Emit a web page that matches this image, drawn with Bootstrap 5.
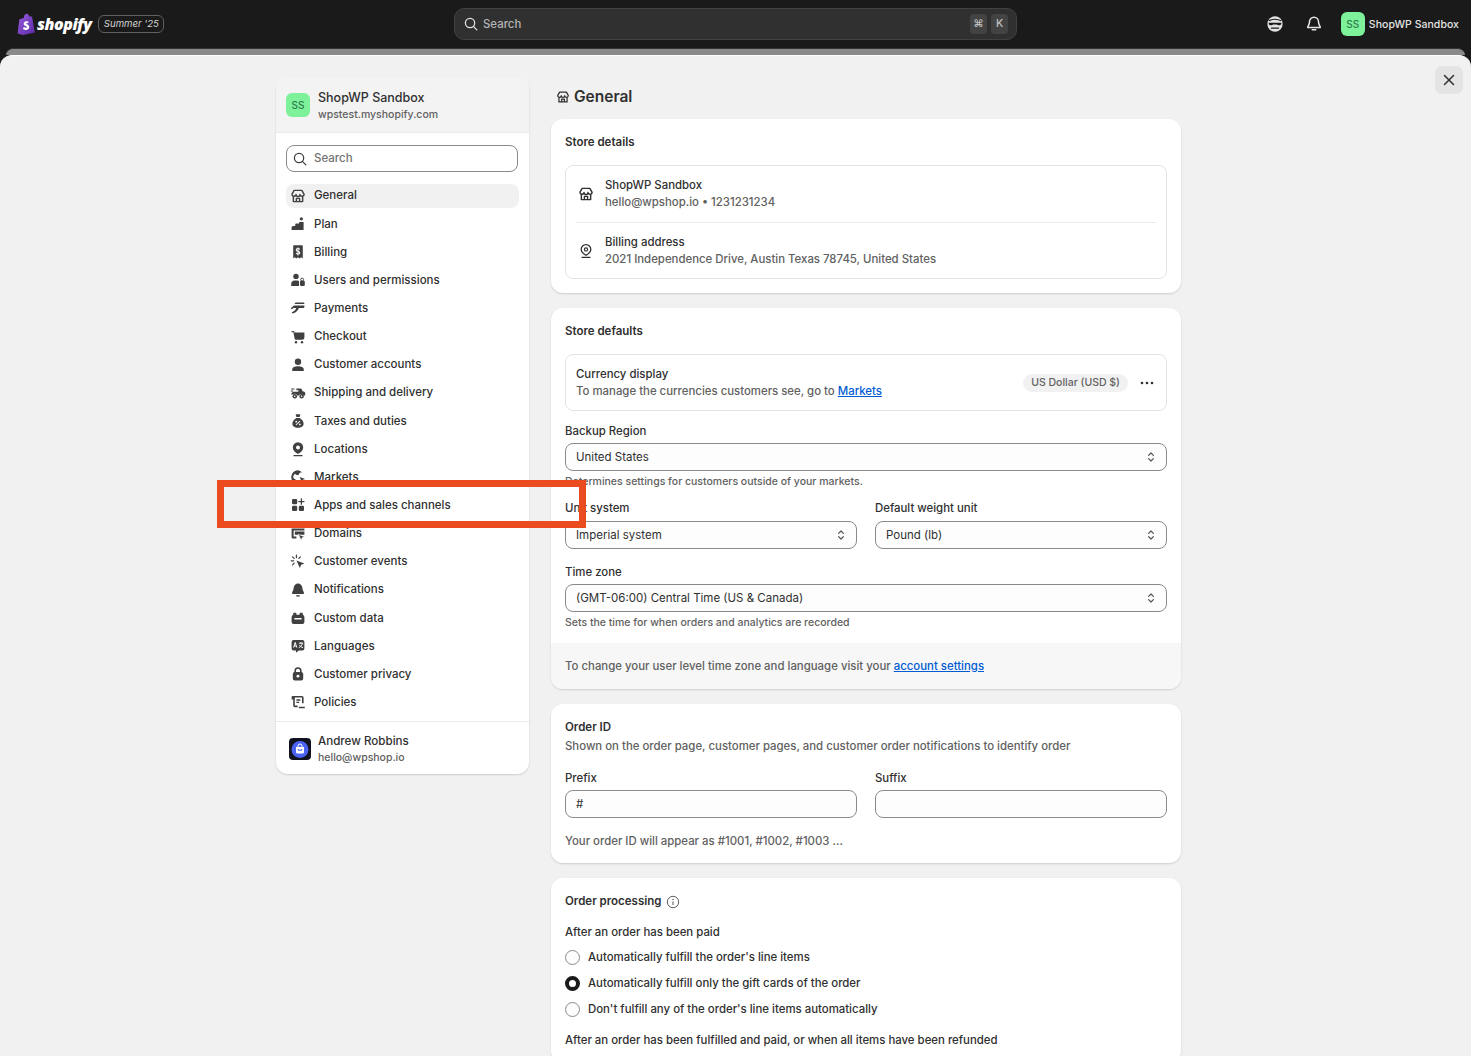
<!DOCTYPE html>
<html lang="en">
<head>
  <meta charset="UTF-8" />
  <meta name="viewport" content="width=device-width, initial-scale=1.0"/>
  <title>General - ShopWP Sandbox</title>
  <link href="https://cdn.jsdelivr.net/npm/bootstrap@5.3.0/dist/css/bootstrap.min.css" rel="stylesheet"/>
  <script src="https://cdn.jsdelivr.net/npm/bootstrap@5.3.0/dist/js/bootstrap.bundle.min.js"></script>
  <style>
  html, body { height: 1056px; overflow: hidden; }
  body {
    background-color: #1a1a1a;
    color: #303030;
    font-family: "Inter", "Liberation Sans", sans-serif;
    font-size: 11.4px;
    line-height: 17px;
    font-weight: 450;
    position: relative;
  }
  .ico { width: 16px; height: 16px; fill: #404040; flex: none; }
  .ico-title { width: 14px; height: 14px; }

  /* top bar */
  .topbar { height: 48px; padding-left: 17px; }
  .brand-box { width: 437px; }
  .brand-word { font-family: "Open Sans", sans-serif; font-weight: 800; font-style: italic; font-size: 16px; letter-spacing: -.5px; color: #fff; margin-left: 2px; line-height: 20px; }
  .brand-tag { margin-left: 7px; height: 18px; width: 66px; border: 1px solid #616161; border-radius: 6px; color: #d4d4d4; font-size: 9.6px; font-style: italic; line-height: 16px; text-align: center; }
  .top-search { width: 563px; height: 32px; background: #303030; border: 1px solid #414141; border-radius: 10px; color: #b5b5b5; padding: 0 8px; }
  .top-key { width: 17px; height: 20px; background: #434343; border-radius: 4px; color: #c4c4c4; font-size: 10.5px; line-height: 20px; text-align: center; }
  .top-right { margin-left: auto; padding-right: 12px; color: #e3e3e3; }
  .top-name { margin-left: 4px; font-size: 10.5px; letter-spacing: .05px; font-weight: 450; }
  .avatar-ss { background: #7df29b; color: #2f7a4b; border-radius: 6px; width: 24px; height: 24px; font-size: 10px; line-height: 24px; text-align: center; flex: none; }
  .face-ico { margin-right: 21px; }
  .bell-ico { margin-right: 18px; }
  .sheet-edge { height: 7px; margin: 0 6px; background: #8a8a8a; border-top: 1px solid #333; border-radius: 8px 8px 0 0; }

  /* sheet */
  .sheet { background: #f1f1f1; height: 1001px; border-top: 1px solid #fff; border-radius: 12px 12px 0 0; padding: 21px 0 0 276px; position: relative; overflow: hidden; }
  .close-btn { position: absolute; top: 10px; right: 8px; width: 28px; height: 28px; background: #e4e4e4; border-radius: 7px; }

  /* sidebar */
  .side-panel { width: 253px; height: 697px; background: #fff; border-radius: 12px; box-shadow: 0 1px 2px rgba(0,0,0,.15); margin-right: 22px; overflow: hidden; flex: none; }
  .side-head { height: 56px; background: #f3f3f3; border-bottom: 1px solid #ebebeb; padding: 0 10px; }
  .side-head-text { padding-top: 2px; }
  .side-sub { color: #616161; font-size: 10.5px; }
  .side-name { font-weight: 550; font-size: 12.5px; }
  .side-search { margin: 12px 11px 11.9px 10px; height: 27px; border: 1px solid #8a8a8a; border-radius: 8px; color: #737373; padding: 0 8px 0 5px; gap: 6px; font-size: 11.5px; }
  .side-list { margin: 0 10px 0; gap: 4.15px; }
  .side-link { height: 24px; padding: 0 5px 0 4px; border-radius: 8px; gap: 8px; font-weight: 500; font-size: 11.5px; color: #303030; text-decoration: none; }
  .side-link.is-on { background: #f1f1f1; }
  .side-foot { height: 53px; border-top: 1px solid #ebebeb; padding: 2px 13px 0; gap: 7px; }
  .foot-name { font-weight: 550; font-size: 11.6px; }
  .foot-mail { color: #616161; font-size: 10.5px; line-height: 15px; }
  .foot-logo { width: 22px; height: 22px; flex: none; }

  /* settings */
  .main-col { width: 630px; flex: none; }
  .page-title { font-size: 15.5px; font-weight: 600; line-height: 20px; margin: 10px 0 12px 5px; gap: 4px; color: #303030; }
  .set-card { background: #fff; border-radius: 12px; box-shadow: 0 1px 2px rgba(0,0,0,.15); margin-bottom: 15px; padding: 15px 14px 0; overflow: hidden; }
  .card-pad { padding-bottom: 14px; }
  .card-pad-sm { padding-bottom: 13px; }
  .set-title { font-weight: 600; font-size: 11.5px; line-height: 17px; margin: 0; }
  .set-title-info { gap: 5px; }
  .set-box { border: 1px solid #e3e3e3; border-radius: 8px; margin-top: 14px; }
  .box-row { margin: 0 10px; gap: 11px; height: 56px; padding-left: 2px; }
  .box-row + .box-row { border-top: 1px solid #ebebeb; }
  .currency-box { height: 57px; padding-left: 10px; }
  .dots-ico { margin: 0 9px 0 1px; }
  .muted-text { color: #616161; }
  .pill-text { background: #f1f1f1; color: #616161; border-radius: 9px; height: 18px; line-height: 18px; padding: 0 8px; font-size: 10.5px; white-space: nowrap; }
  .field-label { display: block; margin: 12px 0 3px; }
  .label-unit { margin: 10px 0 4px; }
  .label-zone { margin-top: 15px; }
  .label-order { margin-top: 15px; }
  .set-field.form-select, .set-field.form-control { height: 28px; border: 1px solid #8a8a8a; border-radius: 8px; padding: 0 10px; color: #303030; font-size: 11.5px; line-height: 26px; box-shadow: none; background-color: #fdfdfd; }
  .set-field.form-select { background-position: right 7px center; background-size: 16px 16px; background-image: url("data:image/svg+xml,%3Csvg xmlns='http://www.w3.org/2000/svg' viewBox='0 0 20 20'%3E%3Cpath d='M7 8l3-3 3 3M7 12l3 3 3-3' fill='none' stroke='%23555' stroke-width='1.5' stroke-linecap='round' stroke-linejoin='round'/%3E%3C/svg%3E"); }
  .help-text { color: #616161; font-size: 10.5px; margin-top: 2px; }
  .two-cols { --bs-gutter-x: 18px; --bs-gutter-y: 0; }
  .set-foot { background: #f7f7f7; margin: 12px -14px 0; height: 46px; padding: 0 14px; }
  .set-foot a, .set-box a { color: #005bd3; }
  .order-desc { margin-top: 2px; }
  .order-note { margin-top: 15px; }
  .radio-head { margin: 14px 0 3px; }
  .radio-next { margin-top: 9px; }
  .radio-line { height: 26.3px; gap: 8px; margin: 0; padding: 0; min-height: 0; }
  .radio-line .form-check-input { float: none; width: 15px; height: 15px; margin: 0; border: 1px solid #8a8a8a; background-color: #fdfdfd; flex: none; box-shadow: none; }
  .radio-line .form-check-input:checked { background: #fff; border: 4.5px solid #1a1a1a; }

  /* annotation from the screenshot */
  .red-frame { position: absolute; left: 217px; top: 480px; width: 369px; height: 48px; border: 7px solid #ea4b1f; z-index: 5; pointer-events: none; }
  </style>
</head>
<body>

<svg width="0" height="0" class="position-absolute">
  <symbol id="i-store" viewBox="0 0 20 20"><path d="M5.2 3h9.600l2.700 4.600a2.500 2.500 0 0 1-5 .6 2.500 2.500 0 0 1-5 0 2.500 2.500 0 0 1-5-.6zM4.200 10.500V17h11.600v-6.500M8 17v-4h4v4" fill="none" stroke="currentColor" stroke-width="1.800" stroke-linejoin="round"/></symbol>
  <symbol id="i-plan" viewBox="0 0 20 20"><path d="M2 17.500v-3a2 2 0 0 1 2-2h2.500v-1.500a1.500 1.500 0 0 1 1.500-1.500H11.500V7.500h5.500v10z"/><circle cx="14.200" cy="3.500" r="2"/></symbol>
  <symbol id="i-billing" viewBox="0 0 20 20"><path d="M4 2.500a1 1 0 0 1 1-1h10a1 1 0 0 1 1 1V18l-2-1.500-2 1.500-2-1.500L8 18l-2-1.500L4 18z"/><path d="M12.300 6.800c-.5-.8-1.300-1.100-2.300-1.100-1.300 0-2.300.6-2.300 1.700 0 2.300 4.600 1.100 4.600 3.400 0 1.100-1 1.700-2.300 1.700-1 0-1.800-.4-2.300-1.200M10 4.300v10" fill="none" stroke="#fff" stroke-width="1.300"/></symbol>
  <symbol id="i-users" viewBox="0 0 20 20"><circle cx="7.500" cy="5.500" r="3.400"/><path d="M1.500 17.500v-2.500a4.500 4.500 0 0 1 4.500-4.500h3c1 0 1.700.3 2.300.7v6.300z"/><circle cx="15.200" cy="9.500" r="1.800" fill="none" stroke="#404040" stroke-width="1.200"/><rect x="12.500" y="11" width="6" height="6.500" rx="1.500"/></symbol>
  <symbol id="i-pay" viewBox="0 0 20 20"><path d="M7 3h9.500a1.500 1.500 0 0 1 1.500 1.500V5H5.500C6 4 6.500 3.500 7 3zM5 7h13v1.500a1.500 1.500 0 0 1-1.500 1.500H11c-.5 2-2 4-4.500 5.500L3.500 17 2 15.500l4-2.500c1-.8 1.500-1.700 1.700-3H4.500L2 11.500 1 10.300z"/></symbol>
  <symbol id="i-cart" viewBox="0 0 20 20"><path d="M2 2.500h2.200a1.300 1.300 0 0 1 1.300 1.100l.1.900H18v6a3 3 0 0 1-3 3H7.500a1.800 1.800 0 0 1-1.800-1.600L4.300 4H2z"/><circle cx="7.500" cy="16.500" r="1.500"/><circle cx="15" cy="16.500" r="1.500"/></symbol>
  <symbol id="i-person" viewBox="0 0 20 20"><circle cx="10" cy="6" r="4"/><path d="M2.800 17.500v-1.800c0-2.500 3-4 7.200-4s7.200 1.500 7.200 4v1.800z"/></symbol>
  <symbol id="i-ship" viewBox="0 0 20 20"><path d="M8 4.500h5.500a1 1 0 0 1 .9.500l1.600 3h1a2 2 0 0 1 2 2v3h-2.500a2.800 2.800 0 0 0-5.200 0H9a3.200 3.200 0 0 0-5.500-1H1.500c.2-2 1.500-3.500 3.500-3.500h5.500V6.500H8z"/><path d="M1 7.500h3M1.500 5h4" fill="none" stroke="#404040" stroke-width="1.300"/><circle cx="6" cy="14" r="2.800"/><circle cx="14.500" cy="14" r="2.800"/><circle cx="6" cy="14" r="1" fill="#fff"/><circle cx="14.500" cy="14" r="1" fill="#fff"/></symbol>
  <symbol id="i-tax" viewBox="0 0 20 20"><path d="M7 1.500h6l-1 3.500H8zM7.800 6.300h4.400C15 8 17 10.500 17 13.500c0 3-2.800 5-7 5s-7-2-7-5c0-3 2-5.500 4.800-7.200z"/><path d="M7.500 15l5-5" stroke="#fff" stroke-width="1.300"/><circle cx="7.800" cy="10.800" r="1.100" fill="#fff"/><circle cx="12.300" cy="14.300" r="1.100" fill="#fff"/></symbol>
  <symbol id="i-pin" viewBox="0 0 20 20"><path d="M10 1.500a6.500 6.500 0 0 1 6.500 6.500c0 3.300-3 6.200-6.500 8.300C6.500 14.200 3.500 11.300 3.500 8A6.500 6.500 0 0 1 10 1.500z"/><circle cx="10" cy="8" r="2.500" fill="#fff"/><path d="M5 18.300h10" stroke="#404040" stroke-width="1.600" stroke-linecap="round"/></symbol>
  <symbol id="i-globe" viewBox="0 0 20 20"><path d="M10 1.500a8.500 8.500 0 1 0 0 17l-.5-2c-1-.2-1.500-1-1.500-2 0-2-4-1.500-4-4.500 0-1.500.8-3 2.300-4 1 1 2.500 2 4.200 1.500 1-.5.700-1.800 1.500-2.500.8-.7 2-.5 3-.5A8.500 8.500 0 0 0 10 1.500z"/><path d="M12 10l7 2.500-3 1-1 3z"/></symbol>
  <symbol id="i-apps" viewBox="0 0 20 20"><rect x="2.500" y="2.500" width="6.500" height="6.500" rx="1.500"/><rect x="2.500" y="11" width="6.500" height="6.500" rx="1.500"/><rect x="11" y="11" width="6.500" height="6.500" rx="1.500"/><path d="M14.200 2.500v6.500M11 5.700h6.500" stroke="#404040" stroke-width="1.600" stroke-linecap="round"/></symbol>
  <symbol id="i-domain" viewBox="0 0 20 20"><path d="M2 3h16v2.500H4.500V13H8v2.500H3.500A1.500 1.500 0 0 1 2 14z"/><path d="M6 7h12v4h-5l-2 1v-1H6z"/><path d="M10.500 10.500l8 3-3.300 1.200-1.200 3.300z" stroke="#fff" stroke-width=".8"/></symbol>
  <symbol id="i-cursor" viewBox="0 0 20 20"><path d="M8 8l10 3.800-4 1.500-1.700 4.200z"/><path d="M8 1.500v3M3.200 3.500l2 2M1.500 8.500h3M3.200 13.500l2-2M13 3.500l-2 2" fill="none" stroke="#404040" stroke-width="1.500" stroke-linecap="round"/></symbol>
  <symbol id="i-bell" viewBox="0 0 20 20"><path d="M10 2a5.500 5.500 0 0 1 5.500 5.500c0 3.500 2 4.500 2 6.500a1 1 0 0 1-1 1h-13a1 1 0 0 1-1-1c0-2 2-3 2-6.500A5.500 5.500 0 0 1 10 2z"/><path d="M7.500 16.500h5a2.500 2 0 0 1-5 0z"/></symbol>
  <symbol id="i-data" viewBox="0 0 20 20"><path d="M5 3.500h2a1 1 0 0 1 1 1V6h4V4.500a1 1 0 0 1 1-1h2a1 1 0 0 1 1 1V6a3 3 0 0 1 2 3v6a2.500 2.500 0 0 1-2.500 2.500h-11A2.500 2.500 0 0 1 2 15V9a3 3 0 0 1 2-3V4.500a1 1 0 0 1 1-1z"/><path d="M5.500 11h9" stroke="#fff" stroke-width="1.700"/></symbol>
  <symbol id="i-lang" viewBox="0 0 20 20"><path d="M4.500 2.500h11A2.500 2.500 0 0 1 18 5v8a2.500 2.500 0 0 1-2.500 2.500H11L7.500 18.500v-3h-3A2.500 2.500 0 0 1 2 13V5a2.500 2.500 0 0 1 2.500-2.500z"/><path d="M4.500 12l2-6.500 2 6.500M5.200 10h2.600M11 6.500h5.500M13.700 5v1.500M15.500 6.500c-.4 2.500-2 4.500-4.500 5.500M11.800 8.500c.7 1.500 2 3 4.500 3.500" fill="none" stroke="#fff" stroke-width="1.200"/></symbol>
  <symbol id="i-lock" viewBox="0 0 20 20"><path d="M10 1.500a4.500 4.500 0 0 1 4.500 4.500v1.500A2.500 2.500 0 0 1 16.500 10v5.500A2.500 2.500 0 0 1 14 18H6a2.500 2.500 0 0 1-2.500-2.500V10a2.500 2.500 0 0 1 2-2.500V6A4.500 4.500 0 0 1 10 1.500zM7.500 7.500h5V6a2.500 2.500 0 0 0-5 0z" fill-rule="evenodd"/><circle cx="10" cy="12.700" r="1.800" fill="#fff"/></symbol>
  <symbol id="i-policy" viewBox="0 0 20 20"><path d="M3.500 2.500H15A2 2 0 0 1 17 4.500v7H15V4.500H6v10H9.500v2H6a2 2 0 0 1-2-2V7H2V4a1.500 1.500 0 0 1 1.500-1.500z"/><path d="M8 7.500h5M8 10.500h3.500" stroke="#404040" stroke-width="1.600"/><path d="M11 16h7.500v1.800H11z"/></symbol>
  <symbol id="i-search" viewBox="0 0 20 20"><circle cx="8.800" cy="8.800" r="5.800" fill="none" stroke="currentColor" stroke-width="1.600"/><path d="M13 13l4.300 4.300" fill="none" stroke="currentColor" stroke-width="1.600" stroke-linecap="round"/></symbol>
  <symbol id="i-pin-line" viewBox="0 0 20 20"><path d="M10 2a6 6 0 0 1 6 6c0 3-2.700 5.300-6 7.300C6.700 13.300 4 11 4 8a6 6 0 0 1 6-6z" fill="none" stroke="currentColor" stroke-width="1.600"/><circle cx="10" cy="8" r="2" fill="none" stroke="currentColor" stroke-width="1.500"/><path d="M5 18h10" stroke="currentColor" stroke-width="1.600" stroke-linecap="round"/></symbol>
</svg>

<header class="topbar d-flex align-items-center">
  <div class="brand-box d-flex align-items-center">
    <svg width="18" height="22" viewBox="0 0 18 22">
      <defs><linearGradient id="bagGrad" x1="0" y1="0" x2="1" y2="1"><stop offset="0" stop-color="#9a5be0"/><stop offset="1" stop-color="#5a2aa5"/></linearGradient></defs>
      <path d="M7 3.200C7.500 1.500 8.800.5 10 .7c1.200.2 2 1.300 2.300 2.700l1.800-.2 1 .8L17.800 19.500 6 22 .6 20.500 2.300 6.500 7 4.800z" fill="url(#bagGrad)"/>
      <path d="M11.600 8.800c-.6-.4-1.400-.6-2.200-.5-1.900.2-2.800 1.400-2.700 2.600.2 2 3.100 2.100 3.200 3.300 0 .7-1.400 1-3.200-.1l-.7 2c1.600 1 3.100 1 4.100.7 1.500-.5 2.400-1.700 2.200-3.100-.3-2.100-3-2.200-3.100-3.100 0-.5.700-.8 2-.3z" fill="#fff"/>
    </svg>
    <span class="brand-word">shopify</span>
    <span class="brand-tag">Summer '25</span>
  </div>
  <div class="top-search d-flex align-items-center gap-1">
    <svg class="ico" aria-hidden="true"><use href="#i-search" color="#e3e3e3"/></svg>
    <span class="flex-grow-1">Search</span>
    <span class="top-key">⌘</span>
    <span class="top-key">K</span>
  </div>
  <div class="top-right d-flex align-items-center">
    <svg width="18" height="18" viewBox="0 0 20 20" class="face-ico">
      <circle cx="10" cy="10" r="8.500" fill="#e3e3e3"/>
      <path d="M3 6.500c4-2 10-2 14 0" stroke="#1a1a1a" stroke-width="1.300" fill="none"/>
      <path d="M3 8.500h14v1.500c-.5 1.800-4 1.800-5 .5H8c-1 1.300-4.500 1.300-5-.5z" fill="#1a1a1a"/>
      <path d="M6 14.500h8" stroke="#1a1a1a" stroke-width="1.500" stroke-linecap="round"/>
    </svg>
    <svg width="18" height="18" viewBox="0 0 20 20" class="bell-ico">
      <path d="M10 2.500a5 5 0 0 1 5 5c0 3.500 2 4.500 2 6.500H3c0-2 2-3 2-6.500a5 5 0 0 1 5-5zM8 16.500h4" fill="none" stroke="#e3e3e3" stroke-width="1.700" stroke-linecap="round" stroke-linejoin="round"/>
    </svg>
    <span class="avatar-ss">SS</span>
    <span class="top-name">ShopWP Sandbox</span>
  </div>
</header>
<div class="sheet-edge"></div>

<div class="sheet d-flex align-items-start">
  <button type="button" class="close-btn btn p-0 d-flex align-items-center justify-content-center" aria-label="Close">
    <svg width="14" height="14" viewBox="0 0 14 14"><path d="M2.500 2.500l9 9M11.500 2.500l-9 9" stroke="#303030" stroke-width="1.500" stroke-linecap="round"/></svg>
  </button>

  <aside class="side-panel d-flex flex-column">
    <div class="side-head d-flex align-items-center gap-2">
      <span class="avatar-ss">SS</span>
      <div class="side-head-text">
        <div class="side-name">ShopWP Sandbox</div>
        <div class="side-sub">wpstest.myshopify.com</div>
      </div>
    </div>
    <div class="side-search d-flex align-items-center">
      <svg class="ico"><use href="#i-search" color="#404040"/></svg>
      <span>Search</span>
    </div>
    <ul class="side-list list-unstyled d-flex flex-column mb-0">
      <li><a href="#" class="side-link is-on d-flex align-items-center"><svg class="ico"><use href="#i-store" color="#404040"/></svg>General</a></li>
      <li><a href="#" class="side-link d-flex align-items-center"><svg class="ico"><use href="#i-plan"/></svg>Plan</a></li>
      <li><a href="#" class="side-link d-flex align-items-center"><svg class="ico"><use href="#i-billing"/></svg>Billing</a></li>
      <li><a href="#" class="side-link d-flex align-items-center"><svg class="ico"><use href="#i-users"/></svg>Users and permissions</a></li>
      <li><a href="#" class="side-link d-flex align-items-center"><svg class="ico"><use href="#i-pay"/></svg>Payments</a></li>
      <li><a href="#" class="side-link d-flex align-items-center"><svg class="ico"><use href="#i-cart"/></svg>Checkout</a></li>
      <li><a href="#" class="side-link d-flex align-items-center"><svg class="ico"><use href="#i-person"/></svg>Customer accounts</a></li>
      <li><a href="#" class="side-link d-flex align-items-center"><svg class="ico"><use href="#i-ship"/></svg>Shipping and delivery</a></li>
      <li><a href="#" class="side-link d-flex align-items-center"><svg class="ico"><use href="#i-tax"/></svg>Taxes and duties</a></li>
      <li><a href="#" class="side-link d-flex align-items-center"><svg class="ico"><use href="#i-pin"/></svg>Locations</a></li>
      <li><a href="#" class="side-link d-flex align-items-center"><svg class="ico"><use href="#i-globe"/></svg>Markets</a></li>
      <li><a href="#" class="side-link d-flex align-items-center"><svg class="ico"><use href="#i-apps"/></svg>Apps and sales channels</a></li>
      <li><a href="#" class="side-link d-flex align-items-center"><svg class="ico"><use href="#i-domain"/></svg>Domains</a></li>
      <li><a href="#" class="side-link d-flex align-items-center"><svg class="ico"><use href="#i-cursor"/></svg>Customer events</a></li>
      <li><a href="#" class="side-link d-flex align-items-center"><svg class="ico"><use href="#i-bell"/></svg>Notifications</a></li>
      <li><a href="#" class="side-link d-flex align-items-center"><svg class="ico"><use href="#i-data"/></svg>Custom data</a></li>
      <li><a href="#" class="side-link d-flex align-items-center"><svg class="ico"><use href="#i-lang"/></svg>Languages</a></li>
      <li><a href="#" class="side-link d-flex align-items-center"><svg class="ico"><use href="#i-lock"/></svg>Customer privacy</a></li>
      <li><a href="#" class="side-link d-flex align-items-center"><svg class="ico"><use href="#i-policy"/></svg>Policies</a></li>
    </ul>
    <div class="side-foot mt-auto d-flex align-items-center">
      <svg class="foot-logo" viewBox="0 0 22 22">
        <rect width="22" height="22" rx="4" fill="#10131f"/>
        <circle cx="11" cy="11.500" r="8.500" fill="#4a63f0"/>
        <path d="M7 9h8v5a1.500 1.500 0 0 1-1.500 1.500h-5A1.500 1.500 0 0 1 7 14z" fill="#fff"/>
        <path d="M9 9V8a2 2 0 0 1 4 0v1" fill="none" stroke="#fff"/>
        <path d="M9 11.500c1 1 3 1 4 0" fill="none" stroke="#4a63f0" stroke-width="1.100"/>
      </svg>
      <div>
        <div class="foot-name">Andrew Robbins</div>
        <div class="foot-mail">hello@wpshop.io</div>
      </div>
    </div>
  </aside>

  <main class="main-col">
    <h1 class="page-title d-flex align-items-center">
      <svg class="ico ico-title"><use href="#i-store" color="#303030"/></svg>General
    </h1>

    <section class="set-card card-pad">
      <h2 class="set-title">Store details</h2>
      <div class="set-box">
        <div class="box-row d-flex align-items-center">
          <svg class="ico"><use href="#i-store" color="#303030"/></svg>
          <div>
            <div>ShopWP Sandbox</div>
            <div class="muted-text">hello@wpshop.io • 1231231234</div>
          </div>
        </div>
        <div class="box-row d-flex align-items-center">
          <svg class="ico"><use href="#i-pin-line" color="#303030"/></svg>
          <div>
            <div>Billing address</div>
            <div class="muted-text">2021 Independence Drive, Austin Texas 78745, United States</div>
          </div>
        </div>
      </div>
    </section>

    <section class="set-card">
      <h2 class="set-title">Store defaults</h2>
      <div class="set-box currency-box d-flex align-items-center justify-content-between">
        <div>
          <div>Currency display</div>
          <div class="muted-text">To manage the currencies customers see, go to <a href="#">Markets</a></div>
        </div>
        <div class="d-flex align-items-center gap-2">
          <span class="pill-text">US Dollar (USD $)</span>
          <svg width="20" height="20" viewBox="0 0 20 20" class="dots-ico"><circle cx="5" cy="10" r="1.300" fill="#303030"/><circle cx="10" cy="10" r="1.300" fill="#303030"/><circle cx="15" cy="10" r="1.300" fill="#303030"/></svg>
        </div>
      </div>
      <label class="field-label">Backup Region</label>
      <select class="set-field form-select"><option>United States</option></select>
      <div class="help-text">Determines settings for customers outside of your markets.</div>
      <div class="row two-cols mt-0">
        <div class="col-6">
          <label class="field-label label-unit">Unit system</label>
          <select class="set-field form-select"><option>Imperial system</option></select>
        </div>
        <div class="col-6">
          <label class="field-label label-unit">Default weight unit</label>
          <select class="set-field form-select"><option>Pound (lb)</option></select>
        </div>
      </div>
      <label class="field-label label-zone">Time zone</label>
      <select class="set-field form-select"><option>(GMT-06:00) Central Time (US &amp; Canada)</option></select>
      <div class="help-text">Sets the time for when orders and analytics are recorded</div>
      <div class="set-foot d-flex align-items-center muted-text">
        <span>To change your user level time zone and language visit your <a href="#">account settings</a></span>
      </div>
    </section>

    <section class="set-card card-pad-sm">
      <h2 class="set-title">Order ID</h2>
      <div class="muted-text order-desc">Shown on the order page, customer pages, and customer order notifications to identify order</div>
      <div class="row two-cols mt-0">
        <div class="col-6">
          <label class="field-label label-order">Prefix</label>
          <input type="text" class="set-field form-control" value="#"/>
        </div>
        <div class="col-6">
          <label class="field-label label-order">Suffix</label>
          <input type="text" class="set-field form-control"/>
        </div>
      </div>
      <div class="muted-text order-note">Your order ID will appear as #1001, #1002, #1003 ...</div>
    </section>

    <section class="set-card card-pad">
      <h2 class="set-title set-title-info d-flex align-items-center">Order processing
        <svg width="14" height="14" viewBox="0 0 14 14"><circle cx="7" cy="7" r="5.700" fill="none" stroke="#616161"/><path d="M7 6.500v3.500" stroke="#616161" stroke-width="1.100"/><circle cx="7" cy="4.500" r=".8" fill="#616161"/></svg>
      </h2>
      <div class="radio-head">After an order has been paid</div>
      <div class="radio-line form-check d-flex align-items-center"><input class="form-check-input" type="radio" name="paid" id="paid1"/><label for="paid1">Automatically fulfill the order's line items</label></div>
      <div class="radio-line form-check d-flex align-items-center"><input class="form-check-input" type="radio" name="paid" id="paid2" checked/><label for="paid2">Automatically fulfill only the gift cards of the order</label></div>
      <div class="radio-line form-check d-flex align-items-center"><input class="form-check-input" type="radio" name="paid" id="paid3"/><label for="paid3">Don't fulfill any of the order's line items automatically</label></div>
      <div class="radio-next">After an order has been fulfilled and paid, or when all items have been refunded</div>
    </section>
  </main>
</div>

<div class="red-frame"></div>

</body>
</html>
